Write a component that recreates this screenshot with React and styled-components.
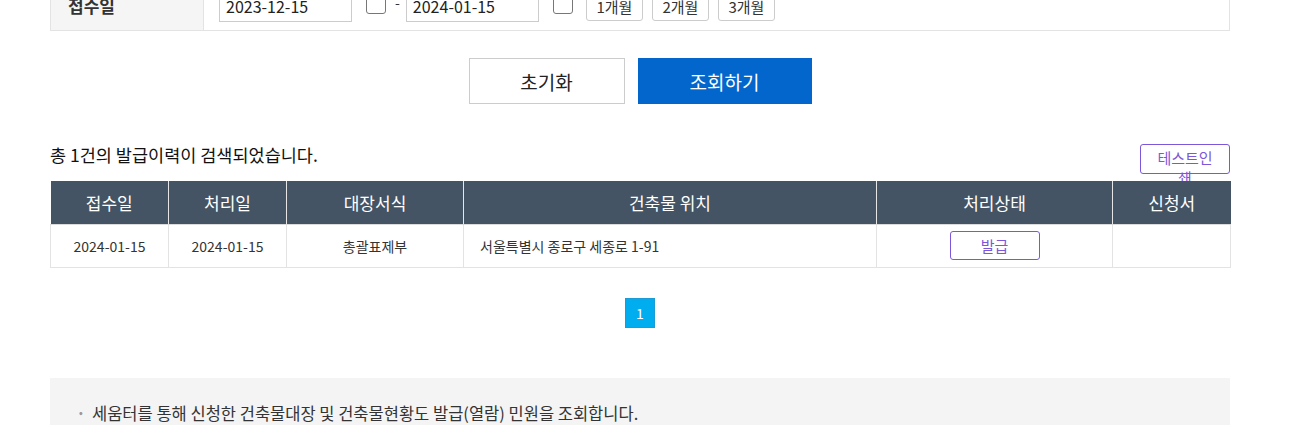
import React from 'react';
import styled, { createGlobalStyle } from 'styled-components';

const GlobalStyle = createGlobalStyle`
  body {
    margin: 0;
    background: #fff;
    font-family: "Noto Sans CJK KR", "Noto Sans", sans-serif;
    color: #333;
  }
  * { box-sizing: border-box; }
`;

const Page = styled.div`
  width: 1280px;
  overflow: hidden;
`;

const Container = styled.div`
  width: 1180px;
  margin: -22px auto 0;
  padding-bottom: 40px;
`;

const SearchRow = styled.div`
  display: flex;
  height: 53px;
  border: 1px solid #e3e3e3;
  border-top: none;
`;

const SearchLabel = styled.div`
  width: 153px;
  background: #f5f5f5;
  border-right: 1px solid #e3e3e3;
  display: flex;
  align-items: center;
  padding: 2px 0 0 17px;
  font-size: 17px;
  font-weight: 700;
  color: #333;
`;

const SearchField = styled.div`
  flex: 1;
  display: flex;
  align-items: center;
  padding: 4px 0 0 15px;
`;

const DateInput = styled.input`
  width: 133px;
  height: 32px;
  border: 1px solid #ccc;
  padding: 0 6px;
  font-family: inherit;
  font-size: 16px;
  color: #222;
  outline: none;
`;

const CheckBox = styled.span`
  width: 20px;
  height: 20px;
  margin: 0 0 5px 14px;
  border: 1px solid #777;
  border-radius: 3px;
  background: #fff;
`;

const Dash = styled.span`
  margin: 0 6px 8px 9px;
  font-size: 14px;
  color: #333;
`;

const PeriodButton = styled.button`
  height: 30px;
  width: 57px;
  margin-left: ${({ $first }) => ($first ? '13px' : '9px')};
  border: 1px solid #ccc;
  border-radius: 3px;
  background: #fff;
  font-family: inherit;
  font-size: 15px;
  color: #333;
  padding: 0;
`;

const ButtonRow = styled.div`
  display: flex;
  justify-content: center;
  gap: 13px;
  margin-top: 27px;
`;

const BigButton = styled.button`
  height: 46px;
  width: ${({ $w }) => $w}px;
  border: 1px solid ${({ $primary }) => ($primary ? '#0366cc' : '#cccccc')};
  background: ${({ $primary }) => ($primary ? '#0366cc' : '#fff')};
  color: ${({ $primary }) => ($primary ? '#fff' : '#222')};
  font-family: inherit;
  font-size: 19px;
  padding: 0;
`;

const ResultBar = styled.div`
  display: flex;
  justify-content: space-between;
  align-items: flex-start;
  margin-top: 40px;
  margin-bottom: 7px;
`;

const ResultText = styled.p`
  margin: 0;
  font-size: 17.5px;
  line-height: 22px;
  color: #111;
`;

const OutlineButton = styled.div`
  width: 90px;
  height: ${({ $h }) => $h}px;
  padding: ${({ $pt }) => $pt}px 14px 0;
  border: 1px solid #7d57d9;
  border-radius: 3px;
  color: #7d57d9;
  font-size: 15px;
  line-height: ${({ $lh }) => $lh}px;
  text-align: center;
  background: #fff;
  margin: ${({ $center }) => ($center ? '0 auto' : '0')};
`;

const Table = styled.table`
  position: relative;
  width: 100%;
  border-collapse: collapse;
  table-layout: fixed;
  background: #fff;
`;

const Th = styled.th`
  height: 43px;
  background: #445465;
  color: #fff;
  font-size: 17px;
  font-weight: 400;
  border-left: 1px solid #e6e6e6;
  border-bottom: 1px solid #dcdcdc;
  &:first-child { border-left: none; }
`;

const Td = styled.td`
  height: 43px;
  border: 1px solid #e3e3e3;
  font-size: 14px;
  color: #333;
  text-align: ${({ $left }) => ($left ? 'left' : 'center')};
  padding: ${({ $left }) => ($left ? '0 16px' : '0')};
`;

const Pagination = styled.div`
  display: flex;
  justify-content: center;
  margin-top: 30px;
`;

const PageNum = styled.span`
  width: 30px;
  height: 30px;
  display: flex;
  align-items: center;
  justify-content: center;
  background: #00aeef;
  border: 1px solid #1c9bd6;
  color: #fff;
  font-size: 14px;
`;

const InfoBox = styled.div`
  margin-top: 50px;
  background: #f4f4f4;
  padding: 23px 26px 30px;
`;

const InfoItem = styled.p`
  margin: 0;
  font-size: 16.5px;
  line-height: 24px;
  color: #333;
  display: flex;
  &::before {
    content: '·';
    color: #999;
    width: 16px;
    font-weight: 700;
  }
`;

const columns = [
  { title: '접수일', width: 118 },
  { title: '처리일', width: 118 },
  { title: '대장서식', width: 177 },
  { title: '건축물 위치', width: 413 },
  { title: '처리상태', width: 236 },
  { title: '신청서', width: 118 },
];

const rows = [
  {
    received: '2024-01-15',
    processed: '2024-01-15',
    form: '총괄표제부',
    location: '서울특별시 종로구 세종로 1-91',
    status: '발급',
  },
];

export default function App() {
  return (
    <Page>
      <GlobalStyle />
      <Container>
        <SearchRow>
          <SearchLabel>접수일</SearchLabel>
          <SearchField>
            <DateInput defaultValue="2023-12-15" readOnly />
            <CheckBox />
            <Dash>-</Dash>
            <DateInput defaultValue="2024-01-15" readOnly />
            <CheckBox />
            <PeriodButton $first>1개월</PeriodButton>
            <PeriodButton>2개월</PeriodButton>
            <PeriodButton>3개월</PeriodButton>
          </SearchField>
        </SearchRow>

        <ButtonRow>
          <BigButton $w={156}>초기화</BigButton>
          <BigButton $w={174} $primary>조회하기</BigButton>
        </ButtonRow>

        <ResultBar>
          <ResultText>총 1건의 발급이력이 검색되었습니다.</ResultText>
          <OutlineButton $h={30} $pt={3} $lh={20}>테스트인쇄</OutlineButton>
        </ResultBar>

        <Table>
          <colgroup>
            {columns.map((c) => (
              <col key={c.title} style={{ width: c.width }} />
            ))}
          </colgroup>
          <thead>
            <tr>
              {columns.map((c) => (
                <Th key={c.title}>{c.title}</Th>
              ))}
            </tr>
          </thead>
          <tbody>
            {rows.map((r) => (
              <tr key={r.location}>
                <Td>{r.received}</Td>
                <Td>{r.processed}</Td>
                <Td>{r.form}</Td>
                <Td $left>{r.location}</Td>
                <Td>
                  <OutlineButton $h={29} $pt={2} $lh={23} $center>{r.status}</OutlineButton>
                </Td>
                <Td />
              </tr>
            ))}
          </tbody>
        </Table>

        <Pagination>
          <PageNum>1</PageNum>
        </Pagination>

        <InfoBox>
          <InfoItem>세움터를 통해 신청한 건축물대장 및 건축물현황도 발급(열람) 민원을 조회합니다.</InfoItem>
        </InfoBox>
      </Container>
    </Page>
  );
}
